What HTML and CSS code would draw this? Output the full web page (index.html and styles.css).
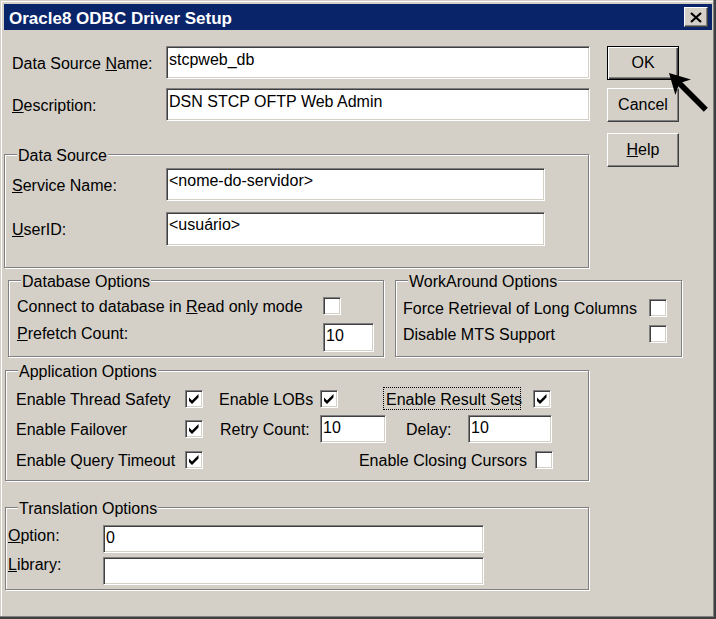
FILE: index.html
```html
<!DOCTYPE html>
<html>
<head>
<meta charset="utf-8">
<title>Oracle8 ODBC Driver Setup</title>
<link rel="stylesheet" href="styles.css">
</head>
<body>
<div class="window">
  <div class="titlebar">
    <span class="title">Oracle8 ODBC Driver Setup</span>
    <span class="close"><svg width="12" height="11" viewBox="0 0 12 11"><path d="M1 1 L11 10 M11 1 L1 10" stroke="#000" stroke-width="2.2"/></svg></span>
  </div>
  <div class="client">
    <div class="upper">
      <div class="leftcol">
        <div class="row r-dsn"><span class="lbl l-top">Data Source <u>N</u>ame:</span><span class="edit e-top">stcpweb_db</span></div>
        <div class="row r-desc"><span class="lbl l-top"><u>D</u>escription:</span><span class="edit e-top">DSN STCP OFTP Web Admin</span></div>
        <div class="group g-ds">
          <div class="legend">Data Source</div>
          <div class="row r-svc"><span class="lbl l-ds"><u>S</u>ervice Name:</span><span class="edit e-ds">&lt;nome-do-servidor&gt;</span></div>
          <div class="row r-uid"><span class="lbl l-ds"><u>U</u>serID:</span><span class="edit e-ds">&lt;usuário&gt;</span></div>
        </div>
      </div>
      <div class="buttons">
        <div class="btn btn-ok">OK</div>
        <div class="btn btn-cancel">Cancel</div>
        <div class="btn btn-help"><u>H</u>elp</div>
      </div>
    </div>

    <div class="optrow">
      <div class="group g-db">
        <div class="legend">Database Options</div>
        <div class="row r-ro"><span class="lbl l-db">Connect to database in <u>R</u>ead only mode</span><span class="chk"></span></div>
        <div class="row r-pf"><span class="lbl l-db l-pf"><u>P</u>refetch Count:</span><span class="edit e-pf">10</span></div>
      </div>
      <div class="group g-wa">
        <div class="legend">WorkAround Options</div>
        <div class="row r-f"><span class="lbl l-wa">Force Retrieval of Long Columns</span><span class="chk"></span></div>
        <div class="row r-m"><span class="lbl l-wa">Disable MTS Support</span><span class="chk"></span></div>
      </div>
    </div>

    <div class="group g-app">
      <div class="legend">Application Options</div>
      <div class="row r-a1">
        <span class="lbl a-first">Enable Thread Safety</span>
        <span class="chk on"><svg viewBox="0 0 16 16" width="16" height="16"><polygon points="3,6.5 6,9.5 12.5,3 12.5,6.5 6,13 3,10"/></svg></span>
        <span class="lbl a-lobs">Enable LOBs</span>
        <span class="chk on"><svg viewBox="0 0 16 16" width="16" height="16"><polygon points="3,6.5 6,9.5 12.5,3 12.5,6.5 6,13 3,10"/></svg></span>
        <span class="lbl a-focus">Enable Result Sets</span>
        <span class="chk on a-rschk"><svg viewBox="0 0 16 16" width="16" height="16"><polygon points="3,6.5 6,9.5 12.5,3 12.5,6.5 6,13 3,10"/></svg></span>
      </div>
      <div class="row r-a2">
        <span class="lbl a-first">Enable Failover</span>
        <span class="chk on"><svg viewBox="0 0 16 16" width="16" height="16"><polygon points="3,6.5 6,9.5 12.5,3 12.5,6.5 6,13 3,10"/></svg></span>
        <span class="lbl a-retry">Retry Count:</span>
        <span class="edit e-retry">10</span>
        <span class="lbl a-delay">Delay:</span>
        <span class="edit e-delay">10</span>
      </div>
      <div class="row r-a3">
        <span class="lbl a-first">Enable Query Timeout</span>
        <span class="chk on"><svg viewBox="0 0 16 16" width="16" height="16"><polygon points="3,6.5 6,9.5 12.5,3 12.5,6.5 6,13 3,10"/></svg></span>
        <span class="lbl a-closing">Enable Closing Cursors</span>
        <span class="chk a-clchk"></span>
      </div>
    </div>

    <div class="group g-tr">
      <div class="legend">Translation Options</div>
      <div class="row r-opt"><span class="lbl l-tr"><u>O</u>ption:</span><span class="edit e-tr">0</span></div>
      <div class="row r-lib"><span class="lbl l-tr l-lib"><u>L</u>ibrary:</span><span class="edit e-tr"></span></div>
    </div>
  </div>

  <svg class="cursor" width="42" height="42" viewBox="0 0 42 42"><polygon transform="translate(1 1)" points="0,0 21.9,6.4 13.3,9.3 38.8,34.8 34.8,38.8 9.3,13.3 6.4,21.9" fill="#000"/></svg>
</div>
</body>
</html>
```

FILE: styles.css
```css
* { box-sizing: border-box; }

body {
  margin: 0;
  font-family: "Liberation Sans", Arial, sans-serif;
  font-size: 16px;
  line-height: 18px;
  color: #000;
  background: #d4d0c8;
}

u { text-decoration: underline; }

.window {
  position: relative;
  width: 716px;
  height: 619px;
  padding: 4px;
  background: #d4d0c8;
  overflow: hidden;
  box-shadow:
    inset -1px -1px 0 #404040,
    inset -2px -2px 0 #404040,
    inset -3px -3px 0 #808080,
    inset 1px 1px 0 #d4d0c8,
    inset 2px 2px 0 #ffffff;
}

/* title bar */
.titlebar {
  height: 26px;
  background: #0a246a;
  display: flex;
  align-items: center;
  padding-left: 5px;
}
.title {
  align-self: flex-start;
  margin-top: 5px;
  line-height: 20px;
  font-size: 17px;
  font-weight: bold;
  color: #fff;
  white-space: nowrap;
}
.close {
  margin-left: auto;
  margin-right: 4px;
  width: 24px;
  height: 20px;
  background: #d4d0c8;
  display: flex;
  align-items: center;
  justify-content: center;
  border: 1px solid;
  border-color: #fff #404040 #404040 #fff;
  box-shadow: inset -1px -1px 0 #808080;
}

/* layout rows */
.upper { display: flex; }
.leftcol { width: 587px; }
.row { display: flex; align-items: center; }
.lbl { flex: none; white-space: nowrap; padding-top: 2px; }

.edit {
  flex: none;
  background: #fff;
  border: 1px solid;
  border-color: #808080 #fff #fff #808080;
  box-shadow: inset 1px 1px 0 #404040, inset -1px -1px 0 #d4d0c8;
  padding: 3px 2px 0;
  white-space: nowrap;
  overflow: hidden;
}

.chk {
  flex: none;
  width: 18px;
  height: 18px;
  background: #fff;
  border: 1px solid;
  border-color: #808080 #fff #fff #808080;
  box-shadow: inset 1px 1px 0 #404040, inset -1px -1px 0 #d4d0c8;
}
.chk svg { display: block; }

/* top fields */
.r-dsn { margin-top: 16px; height: 33px; }
.r-desc { margin-top: 9px; height: 33px; }
.l-top { width: 162px; padding-left: 8px; }
.e-top { width: 424px; height: 33px; padding-top: 4px; }

/* group boxes */
.group {
  border: 1px solid #808080;
  box-shadow: inset 1px 1px 0 #fff, 1px 1px 0 #fff;
}
.legend {
  margin: -8px 0 0 12px;
  padding: 0 1px;
  width: max-content;
  height: 17px;
  background: #d4d0c8;
  white-space: nowrap;
}

.g-ds { margin-top: 33px; width: 585px; height: 114px; }
.r-svc { margin-top: 4px; height: 33px; }
.r-uid { margin-top: 11px; height: 34px; }
.l-ds { width: 161px; padding-left: 7px; }
.e-ds { width: 379px; height: 100%; }

/* buttons */
.buttons {
  margin-left: 16px;
  width: 72px;
  display: flex;
  flex-direction: column;
}
.btn {
  height: 34px;
  display: flex;
  align-items: center;
  justify-content: center;
  background: #d4d0c8;
  border: 1px solid;
  border-color: #fff #404040 #404040 #fff;
  box-shadow: inset -1px -1px 0 #808080;
}
.btn-ok {
  margin-top: 16px;
  border-color: #000;
  box-shadow: inset 1px 1px 0 #fff, inset -1px -1px 0 #404040, inset -2px -2px 0 #808080;
}
.btn-cancel { margin-top: 8px; }
.btn-help { margin-top: 11px; }

/* database / workaround */
.optrow { display: flex; margin-top: 12px; }
.g-db { margin-left: 4px; width: 376px; height: 77px; }
.g-wa { margin-left: 11px; width: 287px; height: 77px; }

.r-ro { margin-top: 7px; height: 18px; }
.r-pf { margin-top: 8px; height: 29px; align-items: flex-start; }
.l-db { width: 314px; padding-left: 8px; }
.l-pf { padding-top: 2px; }
.e-pf { width: 51px; height: 29px; }

.r-f { margin-top: 9px; height: 18px; }
.r-m { margin-top: 8px; height: 18px; }
.l-wa { width: 253px; padding-left: 7px; }

/* application options */
.g-app { margin-top: 13px; margin-left: 1px; width: 584px; height: 111px; }
.r-a1 { margin-top: 7px; height: 23px; }
.r-a2 { margin-top: 5px; height: 28px; }
.r-a3 { margin-top: 8px; height: 18px; }
.a-first { width: 179px; padding-left: 10px; }
.a-lobs { margin-left: 16px; width: 101px; }
.a-focus {
  margin-left: 45px;
  width: 138px;
  height: 23px;
  line-height: 21px;
  padding: 1px 0 0 2px;
  border: 1px dotted #000;
}
.a-rschk { margin-left: 12px; }
.a-retry { margin-left: 17px; width: 100px; }
.e-retry { width: 66px; height: 28px; }
.a-delay { margin-left: 20px; width: 62px; }
.e-delay { width: 84px; height: 28px; }
.a-closing { margin-left: 97px; width: 227px; text-align: right; }
.a-clchk { margin-left: 8px; }

/* translation options */
.g-tr { margin-top: 26px; margin-left: 1px; width: 584px; height: 83px; }
.r-opt { margin-top: 8px; height: 28px; align-items: flex-start; }
.r-lib { margin-top: 4px; height: 28px; align-items: flex-start; }
.l-tr { width: 97px; padding-left: 2px; }
.l-lib { margin-top: -3px; }
.e-tr { width: 381px; height: 28px; }

/* mouse pointer overlay */
.cursor {
  position: absolute;
  left: 668px;
  top: 72px;
}
```
